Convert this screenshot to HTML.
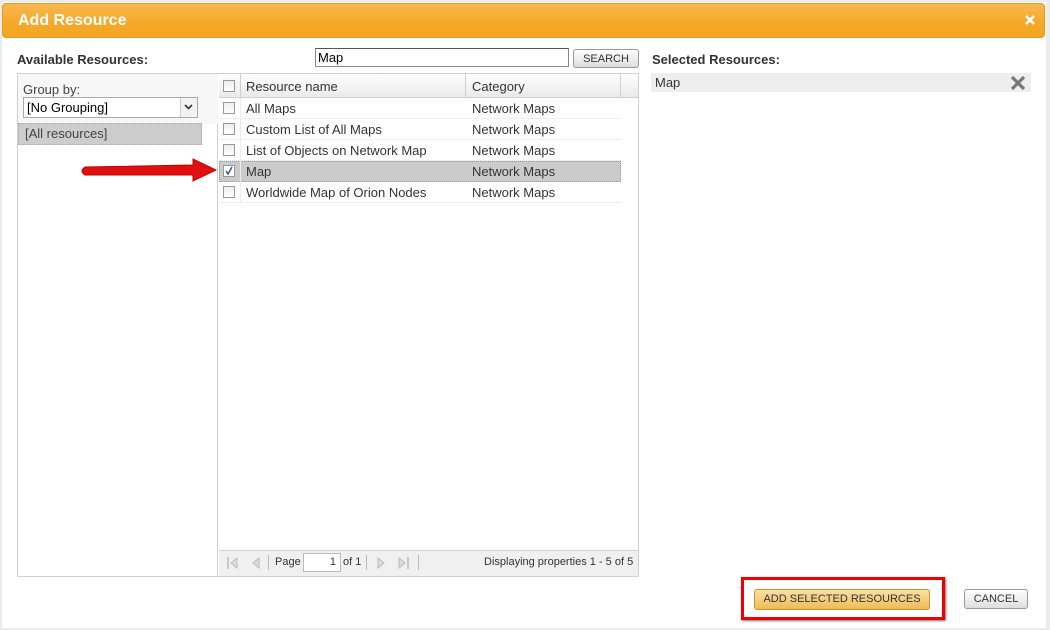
<!DOCTYPE html>
<html><head><meta charset="utf-8"><style>
*{box-sizing:border-box;margin:0;padding:0}
body{width:1050px;height:630px;background:#ececec;font-family:"Liberation Sans",Arial,sans-serif;font-size:13px;color:#333;position:relative;overflow:hidden}
.a{position:absolute}
.dlg{left:2px;top:2px;width:1044px;height:626px;background:#fff}
.hdr{left:2px;top:3px;width:1043px;height:35px;border:1px solid #e39a20;border-radius:4px;background:linear-gradient(#f8b850,#f5a828 60%,#f4a523)}
.title{left:18px;top:12px;color:#fff;font-weight:bold;font-size:16px}
.lbl{font-weight:bold;font-size:13px;color:#333}
.cb{width:12px;height:12px;border:1px solid #999;background:linear-gradient(#eee,#fff)}
.row{left:219px;width:402px;height:21px;border-bottom:1px solid #ededed}
.row span{position:absolute;top:3px}
.btn{border:1px solid #999;border-radius:3px;background:linear-gradient(#fff,#ddd);font-size:11px;text-align:center;line-height:18px}
</style></head><body>
<div class="a dlg"></div>
<div class="a hdr"></div>
<div class="a title">Add Resource</div>
<svg class="a" style="left:1025px;top:15px" width="10" height="10"><path d="M1 1L9 9M9 1L1 9" stroke="#fff" stroke-width="2.5"/></svg>

<div class="a lbl" style="left:17px;top:52px">Available Resources:</div>
<div class="a" style="left:315px;top:48px;width:254px;height:19px;border:1px solid #888;border-top-color:#555;padding-left:2px;line-height:17px;font-size:13px;color:#000">Map</div>
<div class="a btn" style="left:573px;top:49px;width:66px;height:19px">SEARCH</div>

<div class="a" style="left:17px;top:73px;width:622px;height:504px;border:1px solid #d0d0d0;background:#fff"></div>
<div class="a" style="left:18px;top:74px;width:200px;height:502px;background:#fff;border-right:1px solid #d0d0d0"></div>
<div class="a" style="left:18px;top:74px;width:200px;height:50px;background:#f7f7f7"></div>
<div class="a" style="left:23px;top:82px;color:#444">Group by:</div>
<div class="a" style="left:23px;top:97px;width:175px;height:21px;border:1px solid #aaa;background:#fff;padding-left:3px;line-height:19px;color:#000">[No Grouping]</div>
<div class="a" style="left:180px;top:98px;width:17px;height:19px;border-left:1px solid #ccc;background:#f3f3f3"></div>
<svg class="a" style="left:184px;top:104px" width="9" height="6"><path d="M1 1L4.5 4.5L8 1" stroke="#333" stroke-width="1.6" fill="none"/></svg>
<div class="a" style="left:18px;top:123px;width:184px;height:22px;background:#cdcdcd;border:1px dotted #aaa;padding-left:6px;line-height:20px;color:#444">[All resources]</div>

<div class="a" style="left:219px;top:74px;width:419px;height:24px;background:linear-gradient(#fff,#eaeaea);border-bottom:1px solid #d0d0d0"></div>
<div class="a" style="left:240px;top:74px;width:1px;height:24px;background:#d0d0d0"></div>
<div class="a" style="left:465px;top:74px;width:1px;height:24px;background:#d0d0d0"></div>
<div class="a" style="left:620px;top:74px;width:1px;height:24px;background:#d0d0d0"></div>
<div class="a cb" style="left:223px;top:80px"></div>
<div class="a" style="left:246px;top:79px">Resource name</div>
<div class="a" style="left:472px;top:79px">Category</div>

<div class="a row" style="top:98px"><div class="a cb" style="left:4px;top:4px"></div><span style="left:27px">All Maps</span><span style="left:253px">Network Maps</span></div>
<div class="a row" style="top:119px"><div class="a cb" style="left:4px;top:4px"></div><span style="left:27px">Custom List of All Maps</span><span style="left:253px">Network Maps</span></div>
<div class="a row" style="top:140px"><div class="a cb" style="left:4px;top:4px"></div><span style="left:27px">List of Objects on Network Map</span><span style="left:253px">Network Maps</span></div>
<div class="a row" style="top:161px;background:#cbcbcb;border:1px dotted #999"><div class="a cb" style="left:3px;top:3px;background:#fff"></div><svg class="a" style="left:4px;top:4px" width="10" height="10"><path d="M2 5L4 8L8 1" stroke="#3050a0" stroke-width="1.5" fill="none"/></svg><span style="left:26px;top:2px">Map</span><span style="left:252px;top:2px">Network Maps</span></div>
<div class="a row" style="top:182px"><div class="a cb" style="left:4px;top:4px"></div><span style="left:27px">Worldwide Map of Orion Nodes</span><span style="left:253px">Network Maps</span></div>
<div class="a" style="left:240px;top:98px;width:1px;height:105px;background:#ededed"></div>

<div class="a" style="left:219px;top:550px;width:419px;height:26px;background:#f0f0f0;border-top:1px solid #d0d0d0"></div>
<svg class="a" style="left:226px;top:556px" width="40" height="14"><path d="M2 1V13" stroke="#bbb" stroke-width="1.5"/><path d="M11 2L5 7L11 12Z" fill="#ddd" stroke="#bbb"/><path d="M33 2L27 7L33 12Z" fill="#ddd" stroke="#bbb"/></svg>
<div class="a" style="left:268px;top:555px;width:1px;height:15px;background:#bbb"></div>
<div class="a" style="left:275px;top:556px;font-size:11px">Page</div>
<div class="a" style="left:303px;top:553px;width:38px;height:19px;border:1px solid #bbb;background:#fff;font-size:11px;text-align:right;padding-right:4px;line-height:17px">1</div>
<div class="a" style="left:343px;top:556px;font-size:11px">of 1</div>
<div class="a" style="left:366px;top:555px;width:1px;height:15px;background:#bbb"></div>
<svg class="a" style="left:375px;top:556px" width="40" height="14"><path d="M3 2L9 7L3 12Z" fill="#ddd" stroke="#bbb"/><path d="M24 2L30 7L24 12Z" fill="#ddd" stroke="#bbb"/><path d="M33 1V13" stroke="#bbb" stroke-width="1.5"/></svg>
<div class="a" style="left:418px;top:555px;width:1px;height:15px;background:#bbb"></div>
<div class="a" style="left:484px;top:556px;font-size:11px">Displaying properties 1 - 5 of 5</div>

<svg class="a" style="left:78px;top:158px" width="142" height="26"><path d="M7 9 L115 7 L115 1 L138 12 L115 23 L115 17 L7 17 Q1 13 7 9Z" fill="#e01010" stroke="#b00" stroke-width="1"/></svg>

<div class="a lbl" style="left:652px;top:52px">Selected Resources:</div>
<div class="a" style="left:651px;top:73px;width:380px;height:19px;background:#eee;padding-left:4px;line-height:19px">Map</div>
<svg class="a" style="left:1010px;top:75px" width="16" height="16"><path d="M2 2L14 14M14 2L2 14" stroke="#777" stroke-width="3.2"/></svg>

<div class="a" style="left:741px;top:577px;width:204px;height:43px;border:3px solid #e00;box-shadow:1px 1px 2px #777"></div>
<div class="a btn" style="left:754px;top:589px;width:176px;height:21px;line-height:19px;background:linear-gradient(#fbe0a6,#f0bb58);border-color:#c9962e">ADD SELECTED RESOURCES</div>
<div class="a btn" style="left:964px;top:589px;width:64px;height:20px">CANCEL</div>
</body></html>
